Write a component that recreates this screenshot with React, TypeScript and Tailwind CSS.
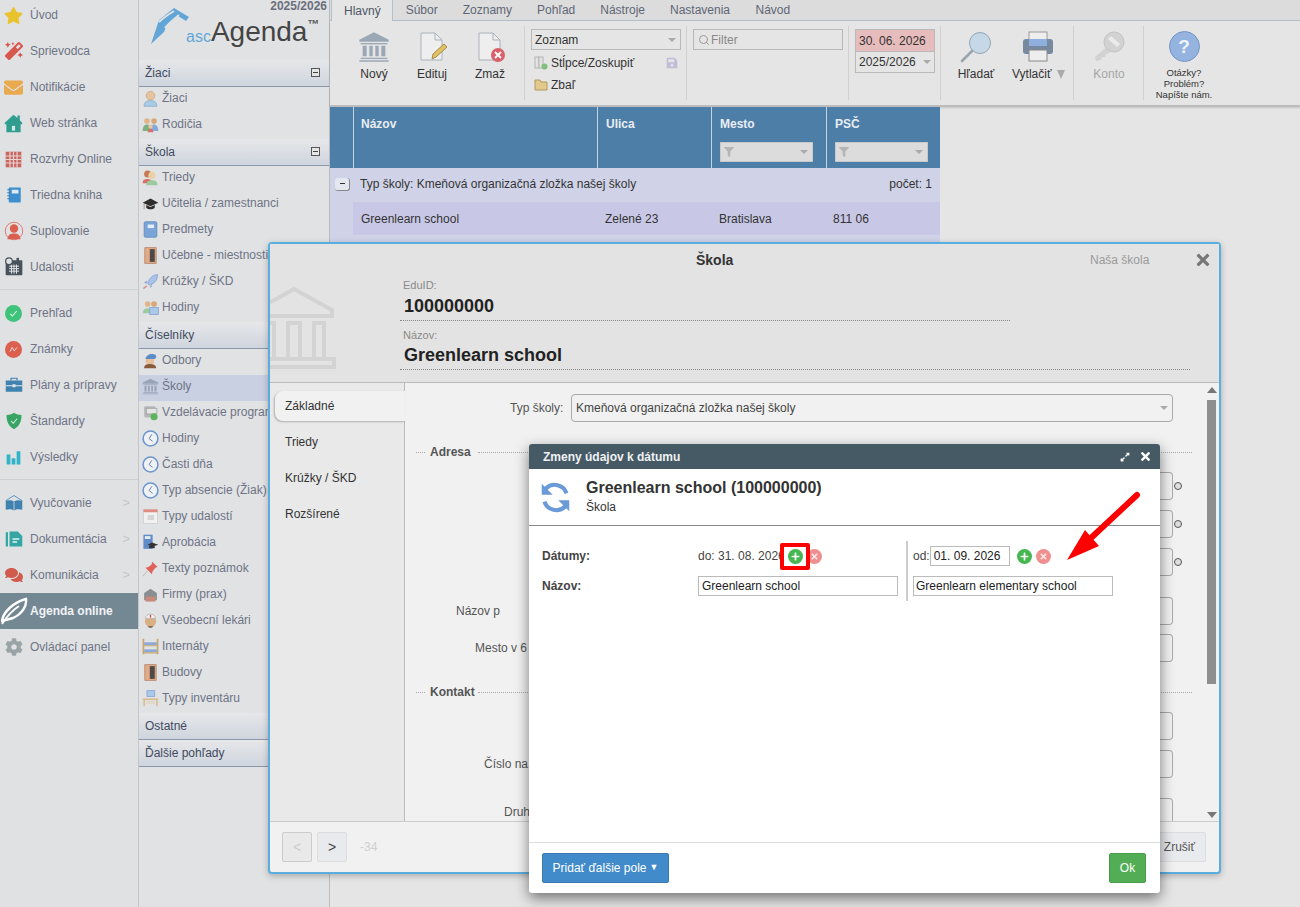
import type { ReactNode } from "react";
import { FaStar, FaMagic, FaEnvelope, FaCog, FaComments, FaTimes, FaExpandAlt, FaFilter, FaPlus, FaSave } from "react-icons/fa";
import { Search } from "lucide-react";

function Svg({ children, size = 20, box = 24 }: { children: ReactNode; size?: number; box?: number }) {
  return (
    <svg width={size} height={size} viewBox={`0 0 ${box} ${box}`} className="shrink-0">
      {children}
    </svg>
  );
}

const House = (
  <Svg size={19}>
    <path d="M12 1l5 4V2h3v6l3 3v2h-2v10H3V13H1v-2z" fill="#2f9e8f" />
    <rect x="10" y="15" width="4" height="6" fill="#d6e8e5" />
  </Svg>
);
const GridCal = (
  <Svg size={17}>
    <rect x="1" y="1" width="22" height="22" fill="#c9655f" />
    <path d="M1 7h22M1 12h22M1 17h22M7 1v22M12 1v22M17 1v22" stroke="#e8d5d3" strokeWidth="1.6" />
  </Svg>
);
const Notebook = (
  <Svg size={18}>
    <rect x="5" y="2" width="16" height="20" rx="1" fill="#3d8fd0" />
    <rect x="9" y="5" width="9" height="5" fill="#dfe9f2" />
    <path d="M3 5h3M3 9h3M3 13h3M3 17h3" stroke="#3d6f9a" strokeWidth="1.2" />
  </Svg>
);
const Supl = (
  <Svg>
    <circle cx="12" cy="12" r="10.5" fill="none" stroke="#db6a5e" />
    <circle cx="12" cy="9" r="5" fill="#db5f50" />
    <path d="M4 22c1-6 4-7 8-7s7 1 8 7z" fill="#db5f50" />
  </Svg>
);
const DarkCal = (
  <Svg>
    <rect x="2" y="4" width="20" height="18" rx="1" fill="#47525c" />
    <path d="M6 11h12M6 14h12M6 17h12M9 9v11M12 9v11M15 9v11" stroke="#dfe1e3" strokeWidth="1.2" />
    <rect x="15" y="1" width="3" height="5" fill="#47525c" />
    <circle cx="6" cy="5" r="4" fill="#e0e1e3" stroke="#47525c" strokeWidth="1.4" />
  </Svg>
);
const CheckCircle = (
  <Svg size={17}>
    <circle cx="12" cy="12" r="12" fill="#3fc27a" />
    <path d="M7.5 12.5l3 3 6-7" fill="none" stroke="#dff5e8" strokeWidth="1.5" />
  </Svg>
);
const MarkCircle = (
  <Svg size={17}>
    <circle cx="12" cy="12" r="12" fill="#dc5f50" />
    <path d="M7 15l3-6 3 5 4-5" fill="none" stroke="#f3d3cf" strokeWidth="1.4" />
  </Svg>
);
const Case = (
  <Svg size={18}>
    <path d="M8 6V3h8v3" fill="none" stroke="#3f82b0" strokeWidth="1.6" />
    <rect x="1" y="6" width="22" height="15" fill="#3f82b0" />
    <path d="M1 13h22" stroke="#dfe6ec" strokeWidth="1.4" />
    <rect x="10" y="11" width="4" height="4" fill="#dfe6ec" />
  </Svg>
);
const Shield = (
  <Svg size={18}>
    <path d="M12 1c3 2 6 3 10 3 0 9-3 15-10 19C5 19 2 13 2 4c4 0 7-1 10-3z" fill="#38a565" />
    <path d="M8 12l3 3 5-6" fill="none" stroke="#dff5e8" strokeWidth="1.4" />
  </Svg>
);
const Bars = (
  <Svg size={15}>
    <path d="M1 7h6v16H1zM9 13h6v10H9zM17 2h6v21h-6z" fill="#2fb4c9" />
  </Svg>
);
const OpenBook = (
  <Svg size={18}>
    <path d="M1 9l11-7 11 7" fill="none" stroke="#4a8cbc" strokeWidth="1.2" />
    <path d="M1 9c4-1 8-1 11 1 3-2 7-2 11-1v12c-4-1-8-1-11 1-3-2-7-2-11-1z" fill="#3f82b0" />
    <path d="M12 10v12" stroke="#dfe1e3" />
  </Svg>
);
const DocTeal = (
  <Svg size={18}>
    <path d="M1 3h3v19H1z" fill="#35a6a4" />
    <path d="M6 2h11l6 6v14H6z" fill="#35a6a4" />
    <path d="M10 12h9M10 16h6" stroke="#e0f2f1" strokeWidth="1.8" />
  </Svg>
);
const Feather = (
  <svg width="28" height="28" viewBox="0 0 28 28" className="shrink-0">
    <path d="M1 24C2 15 13 5 25 2c1 7-4 15-13 19z" fill="none" stroke="#fff" strokeWidth="2.4" />
    <path d="M1 27c5-8 11-14 17-18" fill="none" stroke="#fff" strokeWidth="1.8" />
  </svg>
);

const Person = (
  <Svg size={17}>
    <circle cx="12" cy="8" r="6" fill="#e6c4a0" stroke="#cf9f78" />
    <path d="M3 23c0-7 4-8 9-8s9 1 9 8z" fill="#a8cbe6" stroke="#86a9c6" />
  </Svg>
);
const Family = (
  <Svg size={17}>
    <circle cx="7" cy="7" r="4" fill="#e2b48c" />
    <path d="M1 21c0-7 3-9 6-9s5 2 5 9z" fill="#7fb081" />
    <circle cx="17" cy="7" r="4" fill="#d9a679" />
    <path d="M12 21c0-7 3-9 5-9s6 2 6 9z" fill="#86a9dc" />
    <circle cx="12" cy="15" r="3" fill="#eac3a0" />
    <path d="M8 23c0-3 2-5 4-5s4 2 4 5z" fill="#d6706a" />
  </Svg>
);
const Pupils = (
  <Svg size={17}>
    <circle cx="8" cy="7" r="5" fill="#c7794f" />
    <path d="M1 20c0-5 3-6 7-6s6 2 6 6z" fill="#d6706a" />
    <circle cx="14" cy="9" r="5" fill="#ecd0a9" />
    <path d="M6 23c0-6 4-7 8-7s8 1 8 7z" fill="#9dcba0" />
  </Svg>
);
const Cap = (
  <Svg size={17}>
    <path d="M12 5L1 11l11 5 11-5z" fill="#2d2d2d" />
    <path d="M6 14v4c3 3 9 3 12 0v-4l-6 3z" fill="#2d2d2d" />
    <path d="M3 12v8" stroke="#b0705a" />
  </Svg>
);
const BlueBook = (
  <Svg size={17}>
    <rect x="3" y="1" width="18" height="22" rx="2" fill="#7aa3d8" stroke="#5a84bd" />
    <rect x="8" y="5" width="9" height="5" fill="#e4ecf5" />
  </Svg>
);
const Door = (
  <Svg size={17}>
    <rect x="4" y="1" width="16" height="22" fill="#e3aa86" stroke="#a97b5e" />
    <rect x="11" y="3" width="7" height="18" fill="#4f4a48" />
  </Svg>
);
const Rocket = (
  <Svg size={17}>
    <path d="M22 2c-7 1-12 5-14 13l2 2c8-2 12-7 12-15z" fill="#a9c2e8" stroke="#7f9ccb" />
    <path d="M8 11l-5 2 3 2zM13 16l-2 5 3-2z" fill="#7f9ccb" />
    <path d="M7 18l-5 4" stroke="#d88" strokeWidth="2" />
  </Svg>
);
const Hours = (
  <Svg size={17}>
    <circle cx="8" cy="7" r="4" fill="#e2b48c" />
    <path d="M1 20c0-5 3-7 7-7s6 2 6 7z" fill="#9dcba0" />
    <circle cx="17" cy="7" r="4" fill="#d9a679" />
    <rect x="11" y="12" width="12" height="10" fill="#a9c8ea" stroke="#7f9ccb" />
  </Svg>
);
const Chef = (
  <Svg size={17}>
    <circle cx="11" cy="13" r="6" fill="#e6c09a" />
    <path d="M5 10c0-6 9-9 14-6 2 2 1 5-1 6z" fill="#5b8cc8" />
    <path d="M3 23c0-5 4-6 8-6s9 1 9 6z" fill="#8a5a3c" />
  </Svg>
);
const Bank = (color: string, size = 17) => (
  <Svg size={size}>
    <path d="M12 1L1 6.500V8h22V6.500z" fill={color} />
    <path d="M2 9h20v1H2z" fill={color} />
    <path d="M3.500 11h3v8h-3zM8.500 11h2.500v8H8.500zM13 11h2.500v8H13zM17.500 11h3v8h-3zM2 20h20v1H2zM1 22h22v1H1z" fill={color} />
  </Svg>
);
const Program = (
  <Svg size={17}>
    <rect x="3" y="3" width="16" height="16" rx="2" fill="#b5b8ba" />
    <rect x="6" y="6" width="15" height="8" fill="#e5e5e5" stroke="#999" />
    <circle cx="17" cy="18" r="5" fill="#5bb55b" />
  </Svg>
);
const Clock = (
  <Svg size={17}>
    <circle cx="12" cy="12" r="10.500" fill="#eef2f7" stroke="#6d95cd" strokeWidth="2.2" />
    <path d="M14 6l-4 6 5 4" fill="none" stroke="#6d7f98" strokeWidth="1.4" />
  </Svg>
);
const EventCal = (
  <Svg size={17}>
    <rect x="2" y="2" width="20" height="20" fill="#f1f1f1" stroke="#ccc" />
    <rect x="2" y="2" width="20" height="4" fill="#e08a80" />
    <path d="M8 10h9v7H8z" fill="#d5d5d5" />
  </Svg>
);
const Approb = (
  <Svg size={17}>
    <rect x="2" y="1" width="13" height="20" fill="#5f8bc9" />
    <rect x="4" y="3" width="8" height="4" fill="#e4ecf5" />
    <path d="M14 12l9 3-9 3-6-3z" fill="#333" />
    <path d="M10 17h8v3h-8z" fill="#333" />
  </Svg>
);
const Pin = (
  <Svg size={17}>
    <path d="M14 2l8 8-3 1-4 5-1 4-9-9 4-1 5-4z" fill="#e0605a" />
    <path d="M8 15l-7 8" stroke="#c9b5b0" strokeWidth="1.4" />
  </Svg>
);
const Firm = (
  <Svg size={17}>
    <path d="M3 10l9-6 9 6v10H3z" fill="#8a8f94" />
    <rect x="5" y="15" width="14" height="7" fill="#c98a7a" />
  </Svg>
);
const Doctor = (
  <Svg size={17}>
    <circle cx="12" cy="13" r="8" fill="#d9b083" />
    <path d="M5 9c0-8 14-8 14 0z" fill="#f2f2f2" stroke="#aaa" />
    <rect x="11" y="4" width="2" height="4" fill="#d9534f" />
    <path d="M8 20c2 3 6 3 8 0z" fill="#6b5a46" />
  </Svg>
);
const Bunk = (
  <Svg size={17}>
    <path d="M2 1v22M22 1v22" stroke="#c9a66b" strokeWidth="2.400" />
    <rect x="3" y="6" width="18" height="4" fill="#8fa9d6" />
    <rect x="3" y="16" width="18" height="4" fill="#8fa9d6" />
    <path d="M3 11h18M3 21h18" stroke="#c9a66b" strokeWidth="1.600" />
  </Svg>
);
const Desk = (
  <Svg size={17}>
    <rect x="7" y="1" width="11" height="8" fill="#a9c8ea" stroke="#7f9ccb" />
    <rect x="1" y="12" width="22" height="2" fill="#d8b888" />
    <path d="M3 14v9M21 14v9" stroke="#d8b888" strokeWidth="2" />
    <rect x="6" y="15" width="12" height="5" fill="#e0d8c8" />
  </Svg>
);

const MAIN_TOP = [
  { label: "Úvod", icon: <FaStar size={19} color="#e9c32e" /> },
  { label: "Sprievodca", icon: <FaMagic size={18} color="#d9564d" /> },
  { label: "Notifikácie", icon: <FaEnvelope size={19} color="#e9a94f" /> },
  { label: "Web stránka", icon: House },
  { label: "Rozvrhy Online", icon: GridCal },
  { label: "Triedna kniha", icon: Notebook },
  { label: "Suplovanie", icon: Supl },
  { label: "Udalosti", icon: DarkCal },
];
const MAIN_MID = [
  { label: "Prehľad", icon: CheckCircle },
  { label: "Známky", icon: MarkCircle },
  { label: "Plány a prípravy", icon: Case },
  { label: "Štandardy", icon: Shield },
  { label: "Výsledky", icon: Bars },
];

function MainItem({ label, icon, arrow }: { label: string; icon: ReactNode; arrow?: boolean }) {
  return (
    <div className="flex h-9 items-center text-[12px] text-[#6e7485]">
      <span className="flex w-[26px] shrink-0 justify-center pl-[1px]">{icon}</span>
      <span className="ml-[4px] flex-1 whitespace-nowrap">{label}</span>
      {arrow && <span className="mr-[8px] text-[13px] text-[#c4c6c9]">{">"}</span>}
    </div>
  );
}

function SecHead({ label, toggle }: { label: string; toggle?: boolean }) {
  return (
    <div className="flex h-[27px] items-center justify-between border-b border-[#8d97aa] bg-gradient-to-b from-[#e6e7e9] to-[#cfd5de] pb-[1px] pl-[6px] pr-[9px] text-[12px] text-[#414a60]">
      <span>{label}</span>
      {toggle && (
        <span className="flex h-[9px] w-[9px] items-center justify-center border border-[#555] bg-[#e5e5e5]">
          <span className="h-[1px] w-[5px] bg-[#444]" />
        </span>
      )}
    </div>
  );
}

function SubItem({ label, icon, active }: { label: string; icon: ReactNode; active?: boolean }) {
  return (
    <div className={`flex h-[26px] items-center whitespace-nowrap pb-[4px] pl-[3px] text-[12px] text-[#6e7485] ${active ? "bg-[#c9d0e2]" : ""}`}>
      <span className="flex w-[17px] shrink-0 justify-center">{icon}</span>
      <span className="ml-[3px]">{label}</span>
    </div>
  );
}

function RibbonBtn({ label, icon, muted }: { label: string; icon: ReactNode; muted?: boolean }) {
  return (
    <div className={`flex w-[58px] flex-col items-center text-[12px] ${muted ? "text-[#a5a5a5]" : "text-[#333]"}`}>
      <span className="flex h-[32px] items-center justify-center">{icon}</span>
      <span className="mt-[2px] whitespace-nowrap">{label}</span>
    </div>
  );
}

function Sep({ w, children }: { w: string; children: ReactNode }) {
  return <div className={`my-[5px] flex h-[74px] shrink-0 border-r border-[#d0d0d0] ${w}`}>{children}</div>;
}

function FilterBox() {
  return (
    <div className="mt-[9px] flex h-[20px] w-[93px] items-center justify-between border border-[#c9c9c9] bg-[#dcdcdc] px-[3px]">
      <FaFilter size={10} color="#b5b5b5" />
      <span className="mr-[1px] h-0 w-0 border-x-[4px] border-t-[4px] border-x-transparent border-t-[#aaa]" />
    </div>
  );
}

function Legend({ label }: { label: string }) {
  return (
    <div className="flex h-[14px] items-center pl-[11px] text-[12px] font-bold text-[#555]">
      <span className="w-[9px] border-t border-dotted border-[#aaa]" />
      <span className="ml-[5px] w-[48px]">{label}</span>
      <span className="w-[714px] border-t border-dotted border-[#aaa]" />
    </div>
  );
}

function FormRow({ label, pad, top, reset }: { label?: string; pad?: string; top: string; reset?: boolean }) {
  return (
    <div className={`relative flex h-[28px] items-center whitespace-nowrap text-[12px] text-[#555] ${top}`}>
      {label && <span className={pad}>{label}</span>}
      <div className="absolute right-[29px] top-0 h-[28px] w-[40px] rounded-r-[4px] border border-l-0 border-[#aaa]">
        {reset && <span className="absolute -right-[10px] top-[9px] h-[8px] w-[8px] rounded-full border border-[#555] bg-[#ddd]" />}
      </div>
    </div>
  );
}

function RoundBtn({ kind }: { kind: "add" | "del" }) {
  if (kind === "add") {
    return (
      <span className="flex h-[15px] w-[15px] shrink-0 items-center justify-center rounded-full bg-[#45b650]">
        <FaPlus size={9} color="#fff" />
      </span>
    );
  }
  return (
    <span className="flex h-[15px] w-[15px] shrink-0 items-center justify-center rounded-full bg-[#f08f8f]">
      <FaTimes size={9} color="#fbe3e3" />
    </span>
  );
}

export default function App() {
  return (
    <div className="relative flex h-[907px] w-[1300px] overflow-hidden bg-[#e5e5e5] font-['Liberation_Sans',Arial,sans-serif]">
      {/* main menu */}
      <div className="w-[139px] shrink-0 border-r border-[#c4c6c9] bg-[#e0e1e3]">
        <div className="-mt-[3px] h-[293px] border-b border-[#cfd0d2]">
          {MAIN_TOP.map((m) => <MainItem key={m.label} {...m} />)}
        </div>
        <div className="mt-[5px] h-[185px] border-b border-[#cfd0d2]">
          {MAIN_MID.map((m) => <MainItem key={m.label} {...m} />)}
        </div>
        <div className="mt-[5px]">
          <MainItem label="Vyučovanie" icon={OpenBook} arrow />
          <MainItem label="Dokumentácia" icon={DocTeal} arrow />
          <MainItem label="Komunikácia" icon={<FaComments size={18} color="#cf5a4d" />} arrow />
          <div className="flex h-9 items-center bg-[#748894] pl-[1px] text-[12px] font-bold text-[#f1f3f4]">
            <span className="flex w-[27px] justify-center">{Feather}</span>
            <span className="ml-[2px]">Agenda online</span>
          </div>
          <MainItem label="Ovládací panel" icon={<FaCog size={18} color="#9aa3a6" />} />
        </div>
      </div>

      {/* section list */}
      <div className="w-[191px] shrink-0 border-r border-[#b9bbbe] bg-[#e1e2e4]">
        <div className="h-[60px]">
          <div className="h-[13px] pr-[2px] text-right text-[12px] font-bold leading-[13px] text-[#6b6f7c]">2025/2026</div>
          <div className="mt-[2px] flex items-end pl-[11px]">
            <svg width="40" height="38" viewBox="0 0 40 38" className="-mt-[8px] mb-[4px] shrink-0">
              <path d="M1 37L9 13 24 1l15 9-3 4-8-5-12 11-2 5z" fill="#62a6d8" />
              <path d="M9 15c5-5 10-8 15-11M15 21c5-6 9-9 14-13" stroke="#e1e2e4" strokeWidth="2" fill="none" />
            </svg>
            <span className="-ml-[4px] mb-[4px] text-[16px] leading-[16px] text-[#62a6d8]">asc</span>
            <span className="text-[28px] leading-[34px] text-[#444]">Agenda</span>
            <span className="mb-[20px] text-[12px] font-bold leading-[10px] text-[#555]">™</span>
          </div>
        </div>
        <SecHead label="Žiaci" toggle />
        <SubItem label="Žiaci" icon={Person} />
        <SubItem label="Rodičia" icon={Family} />
        <SecHead label="Škola" toggle />
        <SubItem label="Triedy" icon={Pupils} />
        <SubItem label="Učitelia / zamestnanci" icon={Cap} />
        <SubItem label="Predmety" icon={BlueBook} />
        <SubItem label="Učebne - miestnosti" icon={Door} />
        <SubItem label="Krúžky / ŠKD" icon={Rocket} />
        <SubItem label="Hodiny" icon={Hours} />
        <SecHead label="Číselníky" />
        <SubItem label="Odbory" icon={Chef} />
        <SubItem label="Školy" icon={Bank("#98a5b8")} active />
        <SubItem label="Vzdelávacie programy" icon={Program} />
        <SubItem label="Hodiny" icon={Clock} />
        <SubItem label="Časti dňa" icon={Clock} />
        <SubItem label="Typ absencie (Žiak)" icon={Clock} />
        <SubItem label="Typy udalostí" icon={EventCal} />
        <SubItem label="Aprobácia" icon={Approb} />
        <SubItem label="Texty poznámok" icon={Pin} />
        <SubItem label="Firmy (prax)" icon={Firm} />
        <SubItem label="Všeobecní lekári" icon={Doctor} />
        <SubItem label="Internáty" icon={Bunk} />
        <SubItem label="Budovy" icon={Door} />
        <SubItem label="Typy inventáru" icon={Desk} />
        <SecHead label="Ostatné" />
        <SecHead label="Ďalšie pohľady" />
      </div>

      {/* right part */}
      <div className="min-w-0 flex-1">
        <div className="flex h-[21px] items-end border-b border-[#b4bfcc] bg-[#dcdcdc] pl-[1px] text-[12px] text-[#5f6675]">
          <div className="-mb-[1px] flex h-[21px] items-center border-x border-[#b4bfcc] bg-[#e5e5e5] pl-[12px] pr-[11px] text-[#4d5566]">Hlavný</div>
          <div className="flex h-[20px] items-center pl-[13px] pr-[12.5px]">Súbor</div>
          <div className="flex h-[20px] items-center px-[12.5px]">Zoznamy</div>
          <div className="flex h-[20px] items-center px-[12.5px]">Pohľad</div>
          <div className="flex h-[20px] items-center px-[12.5px]">Nástroje</div>
          <div className="flex h-[20px] items-center px-[12.5px]">Nastavenia</div>
          <div className="flex h-[20px] items-center px-[13px]">Návod</div>
        </div>

        <div className="flex h-[86px] border-b-2 border-[#bcbcbc] bg-[#e5e5e5] shadow-[0_1px_2px_rgba(0,0,0,0.15)]">
          <Sep w="w-[195px] pl-[15px] pt-[5px]">
            <RibbonBtn label="Nový" icon={Bank("#9aa7b5", 32)} />
            <RibbonBtn label="Edituj" icon={
              <svg width="32" height="32" viewBox="0 0 32 32">
                <path d="M5 2h14l7 7v20H5z" fill="#eee" stroke="#aab2bc" />
                <path d="M19 2v7h7" fill="none" stroke="#aab2bc" />
                <path d="M16 28l1-5 11-10 3 3-11 10z" fill="#e4c05e" stroke="#a08a4c" />
              </svg>
            } />
            <RibbonBtn label="Zmaž" icon={
              <svg width="32" height="32" viewBox="0 0 32 32">
                <path d="M5 2h14l7 7v20H5z" fill="#eee" stroke="#aab2bc" />
                <path d="M19 2v7h7" fill="none" stroke="#aab2bc" />
                <circle cx="24" cy="24" r="7" fill="#d9606a" />
                <path d="M21 21l6 6M27 21l-6 6" stroke="#fff" strokeWidth="1.800" />
              </svg>
            } />
          </Sep>
          <Sep w="w-[162px] flex-col pl-[6px] pt-[3px] text-[12px] text-[#333]">
            <div className="flex h-[21px] w-[150px] shrink-0 items-center justify-between border border-[#b9b9b9] pl-[3px] pr-[4px]">
              <span>Zoznam</span>
              <span className="h-0 w-0 border-x-[4px] border-t-[4px] border-x-transparent border-t-[#aaa]" />
            </div>
            <div className="mt-[3px] flex h-[20px] w-[147px] items-center">
              <svg width="14" height="14" viewBox="0 0 14 14" className="ml-[3px]">
                <rect x="1" y="1" width="4" height="11" fill="#e2e2e2" stroke="#b5b5b5" />
                <rect x="5" y="1" width="4" height="11" fill="#e2e2e2" stroke="#b5b5b5" />
                <circle cx="10.500" cy="10.500" r="3" fill="#7cc07c" />
              </svg>
              <span className="ml-[3px] flex-1">Stĺpce/Zoskupiť</span>
              <FaSave size={12} color="#c2bcd8" />
            </div>
            <div className="mt-[2px] flex h-[20px] items-center">
              <svg width="14" height="12" viewBox="0 0 14 12" className="ml-[3px]">
                <path d="M1 1h5l1 2h6v8H1z" fill="#e3c98c" stroke="#b09a60" />
              </svg>
              <span className="ml-[3px]">Zbaľ</span>
            </div>
          </Sep>
          <Sep w="w-[162px] pl-[6px] pt-[3px]">
            <div className="flex h-[21px] w-[150px] items-center border border-[#b9b9b9] pl-[4px] text-[12px] text-[#888]">
              <Search size={12} color="#999" />
              <span className="ml-[1px]">Filter</span>
            </div>
          </Sep>
          <Sep w="w-[92px] pl-[6px] pt-[3px]">
            <div className="h-[44px] w-[80px] border border-[#b9b9b9] text-[12px] text-[#333]">
              <div className="flex h-[21px] items-center bg-[#e6bcbc] pl-[3px]">30. 06. 2026</div>
              <div className="flex h-[21px] items-center justify-between border-t border-[#b9b9b9] pl-[3px] pr-[3px]">
                <span>2025/2026</span>
                <span className="h-0 w-0 border-x-[4px] border-t-[4px] border-x-transparent border-t-[#aaa]" />
              </div>
            </div>
          </Sep>
          <Sep w="w-[133px] pl-[6px] pt-[5px]">
            <RibbonBtn label="Hľadať" icon={
              <svg width="32" height="32" viewBox="0 0 32 32">
                <circle cx="20" cy="12" r="10.500" fill="#c6d8e8" stroke="#8fa5b8" />
                <path d="M12 20L2 30" stroke="#9aa4ad" strokeWidth="2.600" strokeLinecap="round" />
              </svg>
            } />
            <div className="ml-[7px] flex flex-col text-[12px] text-[#333]">
              <span className="flex h-[32px] pl-[10px]">
                <svg width="32" height="32" viewBox="0 0 32 32">
                  <rect x="7" y="1" width="18" height="10" fill="#eee" stroke="#999" />
                  <rect x="1" y="8" width="30" height="15" rx="3" fill="#76899f" />
                  <rect x="7" y="8" width="18" height="7" fill="#8fb0de" />
                  <rect x="7" y="19" width="18" height="11" fill="#eee" stroke="#888" />
                </svg>
              </span>
              <span className="mt-[2px] flex items-center whitespace-nowrap">
                Vytlačiť
                <span className="ml-[6px] h-0 w-0 border-x-[4.500px] border-t-[9px] border-x-transparent border-t-[#aaa]" />
              </span>
            </div>
          </Sep>
          <Sep w="w-[70px] pl-[6px] pt-[5px]">
            <RibbonBtn muted label="Konto" icon={
              <svg width="32" height="32" viewBox="0 0 32 32">
                <path d="M15 15L2 26l1 4 5-1 1-3 3 0 1-3 3-1 2-3z" fill="#d2d2d2" />
                <circle cx="21" cy="11" r="10" fill="#d2d2d2" stroke="#c2c2c2" />
                <path d="M18 5l9 8-3 3-9-8z" fill="#ebebeb" />
              </svg>
            } />
          </Sep>
          <div className="flex w-[80px] flex-col items-center pt-[10px] text-[9.500px] leading-[11px] text-[#333]">
            <span className="flex h-[31px] w-[31px] items-center justify-center rounded-full border border-[#7494c8] bg-[#94b3df] text-[19px] font-bold text-[#eef3fa]">?</span>
            <span className="mt-[5px]">Otázky?</span>
            <span>Problém?</span>
            <span className="whitespace-nowrap">Napíšte nám.</span>
          </div>
        </div>

        <div className="w-[610px] text-[12px]">
          <div className="grid h-[61px] grid-cols-[24px_244px_114px_115px_113px] bg-[#4d7ea8] font-bold text-[#e9edf2]">
            <div className="border-r border-[#c4d3e0]" />
            <div className="border-r border-[#c4d3e0] pl-[7px] pt-[8px]">Názov</div>
            <div className="border-r border-[#c4d3e0] pl-[8px] pt-[8px]">Ulica</div>
            <div className="border-r border-[#c4d3e0] pl-[8px] pt-[8px]">Mesto<FilterBox /></div>
            <div className="pl-[8px] pt-[8px]">PSČ<FilterBox /></div>
          </div>
          <div className="flex h-[34px] items-center justify-between bg-[#d0d3e8] pb-[2px] pl-[5px] pr-[8px] text-[#333]">
            <div className="flex items-center">
              <span className="flex h-[13px] w-[15px] items-center justify-center rounded-[3px] border-b border-r border-[#888] bg-[#e4e6f0]">
                <span className="h-[1px] w-[5px] bg-[#333]" />
              </span>
              <span className="ml-[10px]">Typ školy: Kmeňová organizačná zložka našej školy</span>
            </div>
            <span>počet: 1</span>
          </div>
          <div className="h-[40px] bg-[#d0d3e8] pl-[23px]">
            <div className="grid h-[33px] grid-cols-[244px_114px_115px_114px] items-center bg-[#c8c8e6] text-[#333]">
              <span className="pl-[8px]">Greenlearn school</span>
              <span className="pl-[8px]">Zelené 23</span>
              <span className="pl-[8px]">Bratislava</span>
              <span className="pl-[7px]">811 06</span>
            </div>
          </div>
        </div>
      </div>

      {/* detail dialog */}
      <div className="absolute left-[268px] top-[242px] flex h-[632px] w-[953px] flex-col rounded-[4px] border-2 border-[#5aaede] bg-[#f1f1f1] shadow-[0_2px_6px_rgba(0,0,0,0.25)]">
        <div className="relative h-[139px] shrink-0 overflow-hidden border-b border-[#bbb] bg-[#e3e3e3]">
          <div className="flex h-[32px] items-center whitespace-nowrap pl-[426px]">
            <span className="w-[41px] text-[14px] font-bold text-[#333]">Škola</span>
            <span className="ml-[353px] w-[59px] text-[12px] text-[#9a9a9a]">Naša škola</span>
            <span className="ml-[45px]"><FaTimes size={18} color="#777" /></span>
          </div>
          <svg width="70" height="84" viewBox="0 0 70 84" fill="none" stroke="#d3d3d3" strokeWidth="4" className="absolute -left-[2px] top-[41px]">
            <path d="M-6 22L26 4l38 21v6H-6" />
            <path d="M-6 38h14M18 38h16M44 38h14" />
            <path d="M6 38v34M20 38v34M32 38v34M46 38v34M56 38v34" />
            <path d="M-6 74h72v8H-6" />
          </svg>
          <div className="pl-[130px] pt-[3px]">
            <div className="h-[42px] w-[610px] border-b border-dotted border-[#888]">
              <div className="pl-[3px] text-[11px] leading-[13px] text-[#8a8a8a]">EduID:</div>
              <div className="pl-[4px] pt-[3px] text-[18px] font-bold leading-[22px] text-[#222]">100000000</div>
            </div>
            <div className="mt-[8px] h-[41px] w-[790px] border-b border-dotted border-[#888]">
              <div className="pl-[3px] text-[11px] leading-[13px] text-[#8a8a8a]">Názov:</div>
              <div className="pl-[4px] pt-[2px] text-[18px] font-bold leading-[22px] text-[#222]">Greenlearn school</div>
            </div>
          </div>
        </div>

        <div className="flex min-h-0 flex-1 overflow-hidden border-b border-[#ccc]">
          <div className="w-[135px] shrink-0 border-r border-[#bbb] bg-[#e9e9e9] pt-[8px] text-[12px] text-[#333]">
            <div className="-mr-[1px] ml-[5px] flex h-[30px] items-center rounded-l-[8px] bg-[#f1f1f1] pl-[10px] font-medium text-[#333] shadow-[-1px_1px_2px_rgba(0,0,0,0.25)]">Základné</div>
            <div className="mt-[3px] flex h-[36px] items-center pl-[15px]">Triedy</div>
            <div className="flex h-[36px] items-center pl-[15px]">Krúžky / ŠKD</div>
            <div className="flex h-[36px] items-center pl-[15px]">Rozšírené</div>
          </div>
          <div className="min-w-0 flex-1 overflow-hidden pt-[11px]">
            <div className="flex h-[28px] items-center whitespace-nowrap text-[12px] text-[#555]">
              <span className="ml-[105px] w-[54px]">Typ školy:</span>
              <div className="ml-[7px] flex h-[28px] w-[602px] items-center justify-between rounded-[4px] border border-[#aaa] pl-[4px] pr-[4px] text-[#444]">
                <span>Kmeňová organizačná zložka našej školy</span>
                <span className="h-0 w-0 border-x-[4px] border-t-[4px] border-x-transparent border-t-[#aaa]" />
              </div>
            </div>
            <div className="mt-[23px]"><Legend label="Adresa" /></div>
            <FormRow top="mt-[13px]" reset />
            <FormRow top="mt-[10px]" reset />
            <FormRow top="mt-[10px]" reset />
            <FormRow top="mt-[21px]" label="Názov p" pad="pl-[51px]" />
            <FormRow top="mt-[9px]" label="Mesto v 6" pad="pl-[70px]" />
            <div className="mt-[23px]"><Legend label="Kontakt" /></div>
            <FormRow top="mt-[13px]" />
            <FormRow top="mt-[10px]" label="Číslo na" pad="pl-[79px]" />
            <FormRow top="mt-[20px]" label="Druh" pad="pl-[99px]" />
          </div>
          <div className="relative w-[17px] shrink-0 bg-[#f1f1f1]">
            <span className="absolute left-[5px] top-[4px] h-0 w-0 border-x-[5px] border-b-[6px] border-x-transparent border-b-[#777]" />
            <span className="absolute left-[5px] top-[17px] h-[284px] w-[9px] bg-[#8e8e8e]" />
            <span className="absolute bottom-[3px] left-[5px] h-0 w-0 border-x-[5px] border-t-[6px] border-x-transparent border-t-[#777]" />
          </div>
        </div>

        <div className="flex h-[50px] shrink-0 items-center pl-[12px] pr-[13px] text-[14px]">
          <div className="flex h-[30px] w-[30px] items-center justify-center rounded-[2px] border border-[#ccc] bg-[#e9e9e9] text-[#ccc]">{"<"}</div>
          <div className="ml-[5px] flex h-[30px] w-[30px] items-center justify-center rounded-[2px] border border-[#ddd] bg-[#e9eaee] text-[#444]">{">"}</div>
          <span className="ml-[13px] text-[12px] text-[#cfcfcf]">-34</span>
          <div className="ml-auto flex h-[30px] w-[60px] items-center justify-end rounded-[2px] border border-[#ddd] bg-[#e9eaee] pr-[10px] text-[12px] text-[#555]">Zrušiť</div>
        </div>
      </div>

      {/* date changes modal */}
      <div className="absolute left-[529px] top-[444px] flex h-[449px] w-[631px] flex-col rounded-[3px] bg-white shadow-[0_5px_14px_rgba(0,0,0,0.5)]">
        <div className="flex h-[25px] shrink-0 items-center justify-between rounded-t-[3px] bg-[#465a65] pl-[14px] pr-[8px] text-[12px] font-bold text-[#eef1f3]">
          <span>Zmeny údajov k dátumu</span>
          <span className="flex items-center gap-[9px]">
            <FaExpandAlt size={10} color="#fff" />
            <FaTimes size={13} color="#fff" />
          </span>
        </div>
        <div className="flex h-[57px] shrink-0 border-b border-[#888] pl-[10px] pt-[12px]">
          <svg width="33" height="33" viewBox="0 0 24 24" className="shrink-0">
            <path d="M20 9a9 9 0 0 0-15-3.500L3 8M4 15a9 9 0 0 0 15 3.500l2-2.500" fill="none" stroke="#6a9bd8" strokeWidth="3" />
            <path d="M2 2v8h8zM22 22v-8h-8z" fill="#6a9bd8" />
          </svg>
          <div className="ml-[14px] -mt-[3px]">
            <div className="text-[16px] font-bold leading-[20px] text-[#333]">Greenlearn school (100000000)</div>
            <div className="mt-[2px] text-[12px] leading-[14px] text-[#333]">Škola</div>
          </div>
        </div>
        <div className="flex flex-1 pl-[13px] pt-[15px] text-[12px] text-[#444]">
          <div className="w-[156px] shrink-0 font-bold">
            <div className="flex h-[30px] items-center">Dátumy:</div>
            <div className="mt-[5px] flex h-[20px] items-center">Názov:</div>
          </div>
          <div className="w-[200px] shrink-0">
            <div className="flex h-[30px] items-center">
              <span className="w-[82px] whitespace-nowrap">do: 31. 08. 2026</span>
              <span className="relative z-10 flex h-[27px] w-[30px] items-center justify-center rounded-[2px] border-[4px] border-[#f00] bg-white"><RoundBtn kind="add" /></span>
              <span className="-ml-[3px]"><RoundBtn kind="del" /></span>
            </div>
            <div className="mt-[5px] flex h-[20px] w-[200px] items-center border border-[#bbb] pl-[3px] text-[#222]">Greenlearn school</div>
          </div>
          <div className="ml-[8px] h-[60px] border-l-2 border-[#ccc]" />
          <div className="ml-[5px] w-[200px] shrink-0">
            <div className="flex h-[30px] items-center">
              <span>od:</span>
              <div className="flex h-[20px] w-[80px] items-center border border-[#bbb] pl-[3px] text-[#222]">01. 09. 2026</div>
              <span className="ml-[7px]"><RoundBtn kind="add" /></span>
              <span className="ml-[4px]"><RoundBtn kind="del" /></span>
            </div>
            <div className="mt-[5px] flex h-[20px] w-[200px] items-center border border-[#bbb] pl-[2px] text-[#222]">Greenlearn elementary school</div>
          </div>
        </div>
        <div className="flex h-[51px] shrink-0 items-start justify-between border-t border-[#ddd] pl-[13px] pr-[14px] pt-[10px] text-[12px] text-white">
          <div className="flex h-[30px] w-[127px] items-center justify-center rounded-[2px] border border-[#3a7ab0] bg-[#428bca]">Pridať ďalšie pole <span className="ml-[3px] text-[9px]">▼</span></div>
          <div className="flex h-[30px] w-[37px] items-center justify-center rounded-[2px] border border-[#4a9e4a] bg-[#52ad55]">Ok</div>
        </div>
      </div>

      {/* red arrow */}
      <svg width="90" height="80" viewBox="0 0 90 80" className="absolute left-[1062px] top-[485px]">
        <path d="M75 10L30 52" stroke="#f00" strokeWidth="6" strokeLinecap="round" />
        <path d="M5 75L23 45 37 61z" fill="#f00" />
      </svg>
    </div>
  );
}
